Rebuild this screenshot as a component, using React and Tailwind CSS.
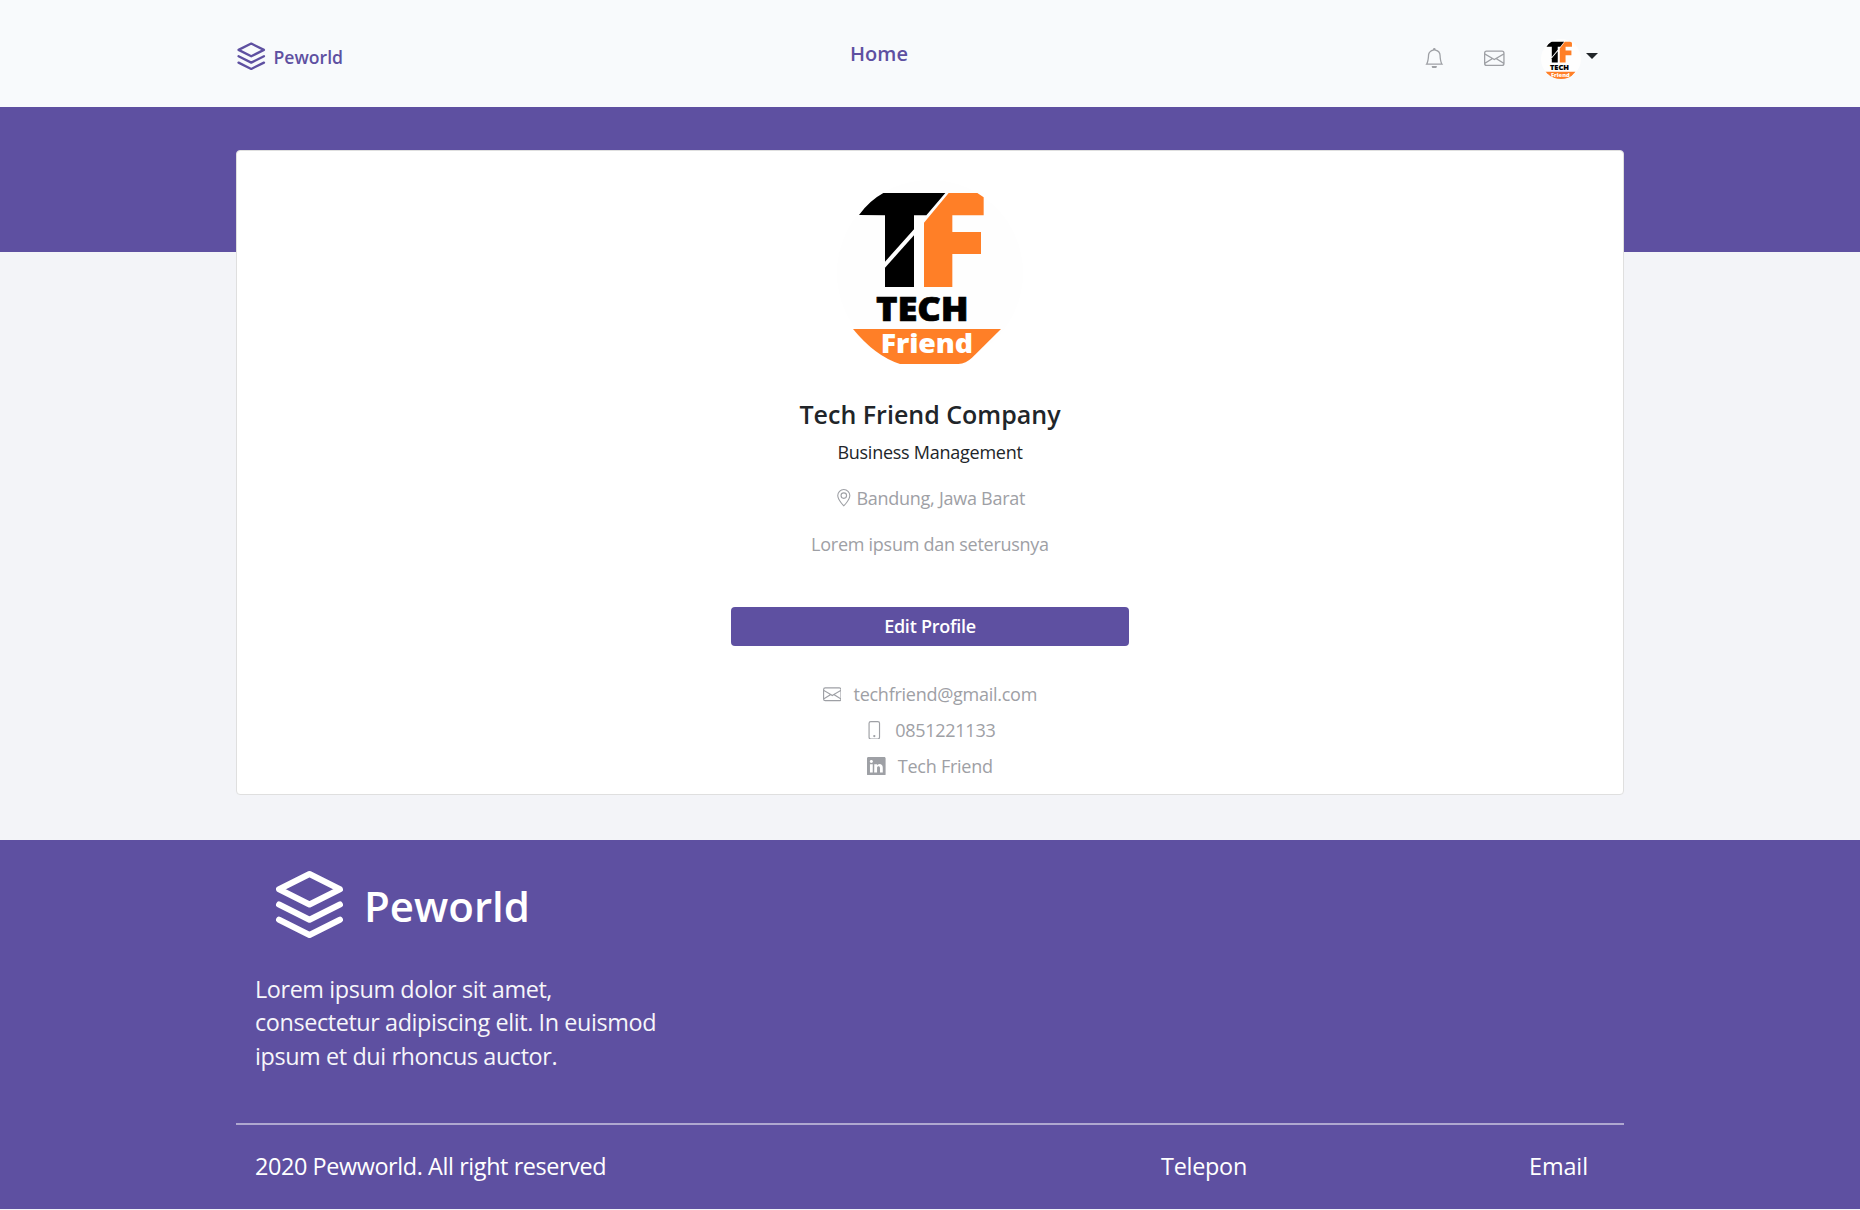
import React from "react";
import { BsBell, BsEnvelope, BsGeoAlt, BsPhone, BsLinkedin } from "react-icons/bs";

function LayersIcon({ className, strokeWidth = 2 }) {
  return (
    <svg
      className={className}
      viewBox="0 0 24 24"
      fill="none"
      stroke="currentColor"
      strokeWidth={strokeWidth}
      strokeLinecap="round"
      strokeLinejoin="round"
    >
      <polygon points="12 2 2 7 12 12 22 7 12 2" />
      <polyline points="2 17 12 22 22 17" />
      <polyline points="2 12 12 17 22 12" />
    </svg>
  );
}

function CompanyLogo({ className }) {
  return (
    <svg className={className} viewBox="51 30 558 558" preserveAspectRatio="none">
      <circle cx="330" cy="309" r="279" fill="#fefefe" />
      <path d="M117 135Q148 92 190 69H376L319 136H282V178L195 275V136Z" fill="#000" />
      <path d="M282 196V351H195V293Z" fill="#000" />
      <path d="M386 69H472L491 82V136H397V186H483V252H397V351H312V158Z" fill="#ff7f27" />
      <path d="M99 477H543L456 563Q438 580 415 582H240Q165 558 99 477Z" fill="#ff7f27" />
      <text
        x="168"
        y="454"
        textLength="278"
        lengthAdjust="spacingAndGlyphs"
        className="font-['Open_Sans',sans-serif] text-[101px] font-extrabold"
        fill="#000"
        stroke="#000"
        strokeWidth="2"
      >
        TECH
      </text>
      <text
        x="182"
        y="550"
        textLength="277"
        lengthAdjust="spacingAndGlyphs"
        className="font-['Open_Sans',sans-serif] text-[80px] font-extrabold"
        fill="#fff"
      >
        Friend
      </text>
    </svg>
  );
}

const contacts = [
  { Icon: BsEnvelope, label: "techfriend@gmail.com" },
  { Icon: BsPhone, label: "0851221133" },
  { Icon: BsLinkedin, label: "Tech Friend" },
];

function Navbar() {
  return (
    <nav className="h-[107px] bg-[#f8fafc]">
      <div className="mx-auto grid h-full w-[1388px] grid-cols-[1fr_auto_1fr]">
        <a className="flex items-start pt-[41px] text-[#5e50a1]">
          <LayersIcon className="h-[30.5px] w-[30.5px]" strokeWidth={1.8} />
          <span className="ml-[7px] mt-[3px] text-[17.6px] font-semibold leading-[27px]">Peworld</span>
        </a>
        <a className="mr-[102px] pt-[39px] text-[20px] font-semibold leading-[30px] text-[#5e50a1]">
          Home
        </a>
        <div className="flex items-start justify-end pr-[26px] text-[#9ea0a5]">
          <BsBell className="mr-[39.5px] mt-[47.5px] h-[20.6px] w-[20.6px]" />
          <BsEnvelope className="mr-[36px] mt-[47.5px] h-[20.6px] w-[20.6px]" />
          <div className="mt-[39px] flex h-10 w-10 items-center justify-center overflow-hidden rounded-full bg-[#fefefe]">
            <CompanyLogo className="h-[41px] w-[38px] shrink-0" />
          </div>
          <span className="ml-[5px] mt-[53px] border-x-[6px] border-t-[6px] border-x-transparent border-t-[#212529]" />
        </div>
      </div>
    </nav>
  );
}

function ProfileCard() {
  return (
    <section className="relative mx-auto flex h-[645px] w-[1388px] flex-col items-center rounded border border-[#dfdfdf] bg-white text-[18px] leading-[26px] tracking-[-0.26px] text-[#9ea0a5]">
      <CompanyLogo className="mt-[29px] h-[186px] w-[186px]" />
      <h1 className="mt-[33px] text-[25px] font-semibold leading-[30px] tracking-normal text-[#212529]">
        Tech Friend Company
      </h1>
      <p className="mt-[10px] text-[#212529]">Business Management</p>
      <p className="mt-5 flex items-center gap-1">
        <BsGeoAlt className="h-[17.6px] w-[17.6px]" />
        Bandung, Jawa Barat
      </p>
      <p className="mt-5">Lorem ipsum dan seterusnya</p>
      <button className="mt-[50px] h-[39px] w-[398px] rounded bg-[#5e50a1] pb-[2px] font-semibold text-white">
        Edit Profile
      </button>
      <ul className="mt-[30px]">
        {contacts.map(({ Icon, label }) => (
          <li key={label} className="flex h-9 items-center justify-center gap-[12px]">
            <Icon className="h-[18.6px] w-[18.6px]" />
            {label}
          </li>
        ))}
      </ul>
    </section>
  );
}

function Footer() {
  return (
    <footer className="h-[369px] bg-[#5e50a1] text-[23.4px] tracking-[-0.4px] text-white">
      <div className="mx-auto w-[1388px]">
        <div className="flex h-[283px] flex-col items-start pl-[19px] pt-[27.5px]">
          <div className="ml-[18px] flex items-center tracking-normal">
            <LayersIcon className="h-[73px] w-[73px]" />
            <span className="ml-[18px] mt-[4px] text-[42px] font-semibold leading-[60px]">Peworld</span>
          </div>
          <p className="mt-[32.5px] w-[420px] leading-[33.3px] opacity-95">
            Lorem ipsum dolor sit amet,
            <br />
            consectetur adipiscing elit. In euismod
            <br />
            ipsum et dui rhoncus auctor.
          </p>
        </div>
        <hr className="border-t-2 border-[#afa8d0]" />
        <div className="flex pl-[19px] pt-[23.5px] leading-[34px]">
          <span className="w-[906px]">2020 Pewworld. All right reserved</span>
          <span className="w-[368px] tracking-[-0.25px]">Telepon</span>
          <span className="tracking-[-0.1px]">Email</span>
        </div>
      </div>
    </footer>
  );
}

export default function App() {
  return (
    <div className="h-[1210px] overflow-hidden bg-[#f3f4f8] font-['Open_Sans','Noto_Sans',sans-serif]">
      <Navbar />
      <main className="h-[733px]">
        <div className="h-[145px] bg-[#5e50a1] pt-[43px]">
          <ProfileCard />
        </div>
      </main>
      <Footer />
    </div>
  );
}
